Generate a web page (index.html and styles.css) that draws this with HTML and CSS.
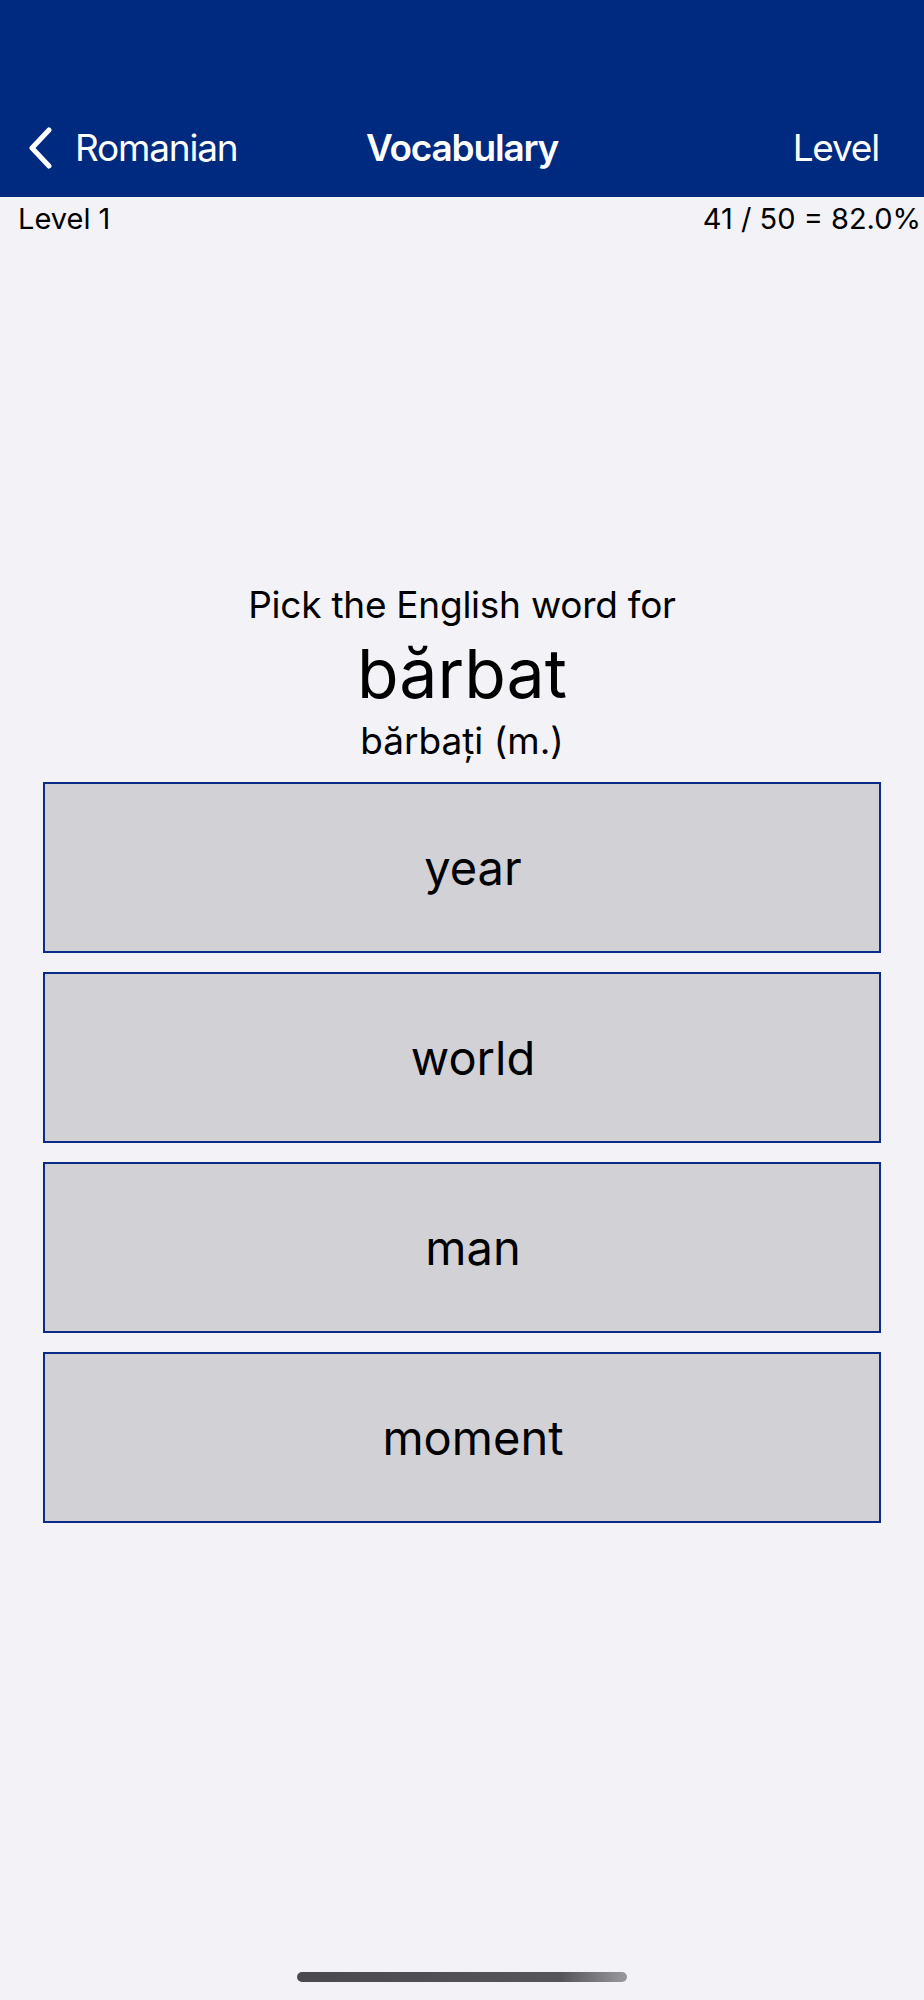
FILE: index.html
```html
<!DOCTYPE html>
<html lang="en">
<head>
<meta charset="utf-8">
<title>Vocabulary</title>
<link rel="stylesheet" href="styles.css">
</head>
<body>
<div class="screen">
  <header class="navbar">
    <div class="nav-left">
      <svg class="chevron" width="26" height="42" viewBox="0 0 26 42"><path d="M22 3 L5 21 L22 39" fill="none" stroke="#fff" stroke-width="5" stroke-linecap="round" stroke-linejoin="round"/></svg>
      <span class="nav-back">Romanian</span>
    </div>
    <div class="nav-title">Vocabulary</div>
    <div class="nav-right">Level</div>
  </header>
  <div class="status-row">
    <span>Level 1</span>
    <span>41 / 50 = 82.0%</span>
  </div>
  <main class="quiz">
    <div class="prompt">Pick the English word for</div>
    <div class="word">bărbat</div>
    <div class="plural">bărbați (m.)</div>
    <div class="choices">
      <button class="choice">year</button>
      <button class="choice">world</button>
      <button class="choice">man</button>
      <button class="choice">moment</button>
    </div>
  </main>
  <div class="home-indicator"></div>
</div>
</body>
</html>
```
FILE: styles.css
```css
html, body {
  margin: 0;
  padding: 0;
  background: #f2f2f7;
}
body {
  font-family: Inter, "Liberation Sans", sans-serif;
  color: #000;
}
.screen {
  width: 924px;
  height: 2000px;
  display: flex;
  flex-direction: column;
  background: #f2f2f7;
}
.navbar {
  height: 197px;
  box-sizing: border-box;
  padding-top: 100px;
  background: #002a80;
  color: #fff;
  display: grid;
  grid-template-columns: 1fr auto 1fr;
  align-items: center;
  font-size: 37px;
  letter-spacing: -1.2px;
}
.nav-left {
  display: flex;
  align-items: center;
  padding-left: 27px;
  gap: 22px;
  margin-top: -2px;
}
.chevron { display: block; }
.nav-title {
  font-weight: 600;
  margin-top: -2px;
}
.nav-right {
  justify-self: end;
  padding-right: 45px;
  margin-top: -2px;
}
.status-row {
  display: flex;
  justify-content: space-between;
  padding: 4px 3px 0 18px;
  font-size: 29px;
  line-height: 36px;
}
.quiz {
  display: flex;
  flex-direction: column;
  align-items: center;
  padding-top: 345px;
}
.prompt {
  font-size: 37px;
  line-height: 46px;
  letter-spacing: -0.25px;
}
.word {
  font-size: 68px;
  line-height: 82px;
  margin-top: 4px;
  margin-bottom: 4px;
}
.plural {
  font-size: 37px;
  line-height: 46px;
}
.choices {
  display: flex;
  flex-direction: column;
  gap: 19px;
  margin-top: 18px;
  width: 838px;
}
.choice {
  height: 171px;
  box-sizing: border-box;
  border: 2px solid #0b2c86;
  background: #d1d1d6;
  font-family: Inter, "Liberation Sans", sans-serif;
  font-size: 47px;
  color: #000;
  padding: 0 0 0 22px;
  margin: 0;
}
.home-indicator {
  margin: auto auto 18px;
  width: 330px;
  height: 10px;
  border-radius: 5px;
  background: linear-gradient(90deg, #4a4a4e 0%, #56565a 80%, #9a9a9e 100%);
}
```
